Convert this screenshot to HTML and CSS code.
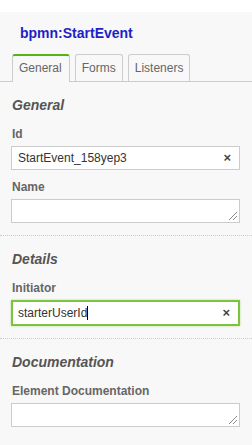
FILE: index.html
```
<!DOCTYPE html>
<html lang="en">
<head>
    <meta charset="UTF-8">
    <meta name="viewport" content="width=device-width, initial-scale=1.0">
    <title>Properties</title>
    <link rel="stylesheet" href="styles.css">
</head>
<body>
    <div class="panel">
        <div class="header">bpmn:StartEvent</div>
        <div class="tabs">
            <div class="tab active">General</div>
            <div class="tab">Forms</div>
            <div class="tab">Listeners</div>
        </div>

        <div class="group">
            <div class="group-title">General</div>
            <div class="field">
                <label>Id</label>
                <div class="input">StartEvent_158yep3<span class="clear">&times;</span></div>
            </div>
            <div class="field">
                <label>Name</label>
                <div class="input area"><span class="grip"></span></div>
            </div>
        </div>

        <div class="group">
            <div class="group-title">Details</div>
            <div class="field">
                <label>Initiator</label>
                <div class="input focus">starterUserId<span class="caret"></span><span class="clear">&times;</span></div>
            </div>
        </div>

        <div class="group">
            <div class="group-title">Documentation</div>
            <div class="field">
                <label>Element Documentation</label>
                <div class="input area"><span class="grip"></span></div>
            </div>
        </div>
    </div>
</body>
</html>
```

FILE: styles.css
```
body {
    margin: 0;
    padding: 0;
    background-color: #fff;
    font-family: "Liberation Sans", Arial, sans-serif;
}
.panel {
    margin-top: 12px;
    background-color: #f8f8f8;
    height: 433px;
}
.header {
    padding: 13px 0 0 20px;
    height: 29px;
    font-size: 14px;
    font-weight: bold;
    color: #1f1fc8;
}
.tabs {
    display: flex;
    gap: 5px;
    padding-left: 12px;
    border-bottom: 1px solid #ccc;
}
.tab {
    padding: 0 6px;
    height: 26px;
    line-height: 26px;
    font-size: 12px;
    color: #666;
    border: 1px solid #ccc;
    border-bottom: none;
    border-radius: 3px 3px 0 0;
}
.tab.active {
    border-top: 2px solid #52b415;
    height: 26px;
    line-height: 25px;
    background-color: #f8f8f8;
    margin-bottom: -1px;
    padding: 0 7px 0 6px;
}
.group {
    padding: 12px 12px 2px 11px;
    border-bottom: 1px dotted #ccc;
}
.group:first-of-type {
    padding-top: 7px;
}
.group:last-child {
    border-bottom: none;
}
.group-title {
    font-size: 14px;
    line-height: 16px;
    font-weight: bold;
    font-style: italic;
    color: #555;
    margin: 3px 1px 14px;
}
.field {
    margin-bottom: 10px;
}
.field label {
    display: block;
    font-size: 12px;
    line-height: 14px;
    font-weight: bold;
    color: #666;
    margin: 0 1px 5px;
}
.input {
    position: relative;
    height: 22px;
    line-height: 22px;
    padding: 0 6px;
    font-size: 12px;
    color: #333;
    background-color: #fff;
    border: 1px solid #ccc;
}
.input.focus {
    border: 2px solid #7cc43e;
    height: 22px;
    padding: 0 5px;
    box-shadow: 0 0 2px #b5e08e;
}
.clear {
    position: absolute;
    right: 8px;
    top: 0;
    font-size: 13px;
    font-weight: bold;
    color: #444;
}
.caret {
    display: inline-block;
    width: 1px;
    height: 14px;
    background-color: #000;
    vertical-align: -3px;
}
.grip {
    position: absolute;
    right: 2px;
    bottom: 2px;
    width: 8px;
    height: 8px;
    background: linear-gradient(135deg, transparent 45%, #888 45%, #888 55%, transparent 55%, transparent 70%, #888 70%, #888 80%, transparent 80%);
}
```
